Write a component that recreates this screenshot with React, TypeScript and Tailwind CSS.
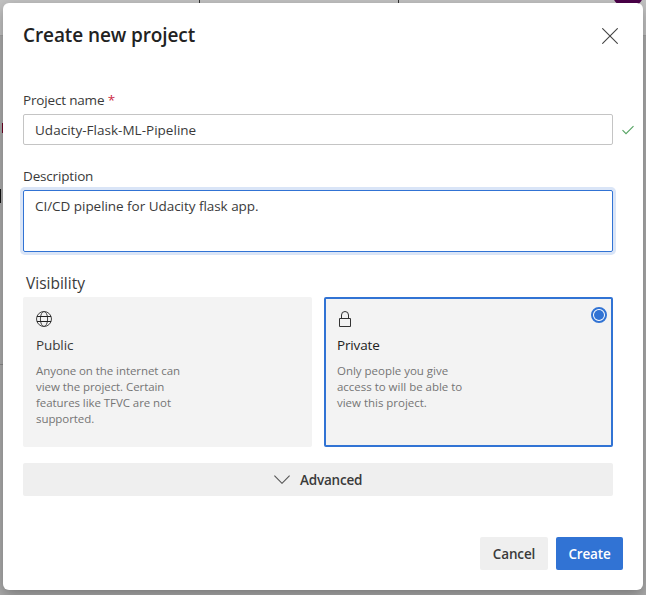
import React from 'react';

function Globe() {
  return (
    <svg width="16" height="16" viewBox="0 0 16 16" fill="none" stroke="#444" strokeWidth="1">
      <circle cx="8" cy="8" r="7.5" />
      <ellipse cx="8" cy="8" rx="3.6" ry="7.5" />
      <path d="M1 5.5h14M1 10.5h14" stroke="#222" />
    </svg>
  );
}

function Lock() {
  return (
    <svg width="16" height="16" viewBox="0 0 16 16" fill="none" stroke="#333" strokeWidth="1">
      <path d="M2.5 7.5h11v8h-11z" />
      <path d="M4.5 7.5V4a3.5 3.5 0 0 1 7 0v3.5" />
    </svg>
  );
}

function Backdrop() {
  return (
    <div className="absolute inset-0 flex flex-col bg-[#acacac]" aria-hidden="true">
      <div className="h-9 border-b border-[#a4a4a4] bg-[#c2c2c2]" />
      <div className="absolute left-[199px] top-0 h-4 w-px bg-[#333]" />
      <div className="absolute left-[398px] top-0 h-4 w-px bg-[#333]" />
      <div className="absolute left-[612px] -top-[24px] size-[32px] rounded-full bg-[#4b0049]" />
      <div className="absolute left-[2px] top-[123px] h-[10px] w-1 bg-[#700024]" />
      <div className="absolute left-0 top-[189px] h-[14px] w-px bg-[#111]" />
      <div className="absolute left-0 top-[364px] h-px w-1 bg-[#8a8a8a]" />
    </div>
  );
}

export default function App() {
  return (
    <div className="relative h-[595px] w-[646px] overflow-hidden p-[3px] font-['Open_Sans','Noto_Sans',sans-serif] text-[#3a3a3a]">
      <Backdrop />
      <section className="relative flex h-[587px] w-[640px] flex-col rounded-md bg-white px-5 shadow-[0_5px_14px_rgba(0,0,0,0.3)]">
        <header className="flex h-[66px] justify-between pt-[18px]">
          <h1 className="text-[19px] font-semibold leading-7 tracking-[-0.1px] text-[#222]">Create new project</h1>
          <svg className="mr-[5px] mt-[7px]" width="16" height="16" viewBox="0 0 16 16" stroke="#444" strokeWidth="1.1">
            <path d="M.3.3l15.4 15.4M15.7.3L.3 15.7" />
          </svg>
        </header>

        <label className="mt-[21px] text-[13.5px] leading-5 tracking-[-0.17px]">
          Project name <span className="text-[#cd2a45]">*</span>
        </label>
        <div className="mt-1 flex items-center">
          <div className="flex h-[31px] w-[590px] shrink-0 items-center rounded-xs border border-[#c4c4c4] pl-[11px] pt-px text-[13.5px] tracking-[0.02px]">
            Udacity-Flask-ML-Pipeline
          </div>
          <svg className="ml-[9px] shrink-0" width="12" height="10" viewBox="0 0 12 10" fill="none" stroke="#55a362" strokeWidth="1.1">
            <path d="M.5 5.2L4 8.7 11.5 1.2" />
          </svg>
        </div>

        <label className="mt-[21px] text-[13.5px] leading-5 tracking-[-0.17px]">Description</label>
        <div className="mt-1 h-[62px] w-[590px] rounded-xs border border-[#3173d4] pl-[11px] pt-[5px] text-[13.5px] leading-5 tracking-[-0.04px] shadow-[0_0_0_3px_#dae5f7]">
          CI/CD pipeline for Udacity flask app.
        </div>

        <h2 className="ml-[3px] mt-[19px] text-[15.5px] leading-6 tracking-[0px]">Visibility</h2>
        <div className="mt-0.5 flex gap-3">
          <div className="h-[150px] w-[289px] rounded-xs bg-[#f3f3f3] px-[13px] pt-[14px]">
            <Globe />
            <div className="mt-[8px] text-[13.5px] leading-5 tracking-[-0.1px]">Public</div>
            <p className="mt-[8px] text-[11.5px] leading-4 tracking-[-0.07px] text-[#757575]">
              Anyone on the internet can<br />view the project. Certain<br />features like TFVC are not<br />supported.
            </p>
          </div>
          <div className="flex h-[150px] w-[289px] justify-between rounded-xs border-2 border-[#3173d4] bg-[#f3f3f3] pl-[11px] pr-1">
            <div className="pt-3">
              <Lock />
              <div className="mt-[8px] text-[13.5px] leading-5 tracking-[-0.15px] text-[#222]">Private</div>
              <p className="mt-[8px] text-[11.5px] leading-4 tracking-[-0.02px] text-[#757575]">
                Only people you give<br />access to will be able to<br />view this project.
              </p>
            </div>
            <svg className="mt-2" width="16" height="16" viewBox="0 0 16 16">
              <circle cx="8" cy="8" r="7" fill="white" stroke="#3173d4" strokeWidth="2" />
              <circle cx="8" cy="8" r="5" fill="#3173d4" />
            </svg>
          </div>
        </div>

        <button className="mt-4 flex h-[33px] w-[590px] items-center rounded-xs bg-[#efefef] pl-[251px] text-[13.5px] font-semibold tracking-[-0.2px]">
          <svg width="16" height="9" viewBox="0 0 16 9" fill="none" stroke="#555" strokeWidth="1.1">
            <path d="M.4.7L8 8.3 15.6.7" />
          </svg>
          <span className="ml-[10px] pt-0.5">Advanced</span>
        </button>

        <footer className="mt-[41px] flex justify-end gap-2 text-[13.5px] font-semibold tracking-[-0.15px]">
          <button className="h-[33px] w-[68px] rounded-xs bg-[#efefef] pt-0.5">Cancel</button>
          <button className="h-[33px] w-[67px] rounded-xs bg-[#3173d4] pt-0.5 text-white">Create</button>
        </footer>
      </section>
    </div>
  );
}
